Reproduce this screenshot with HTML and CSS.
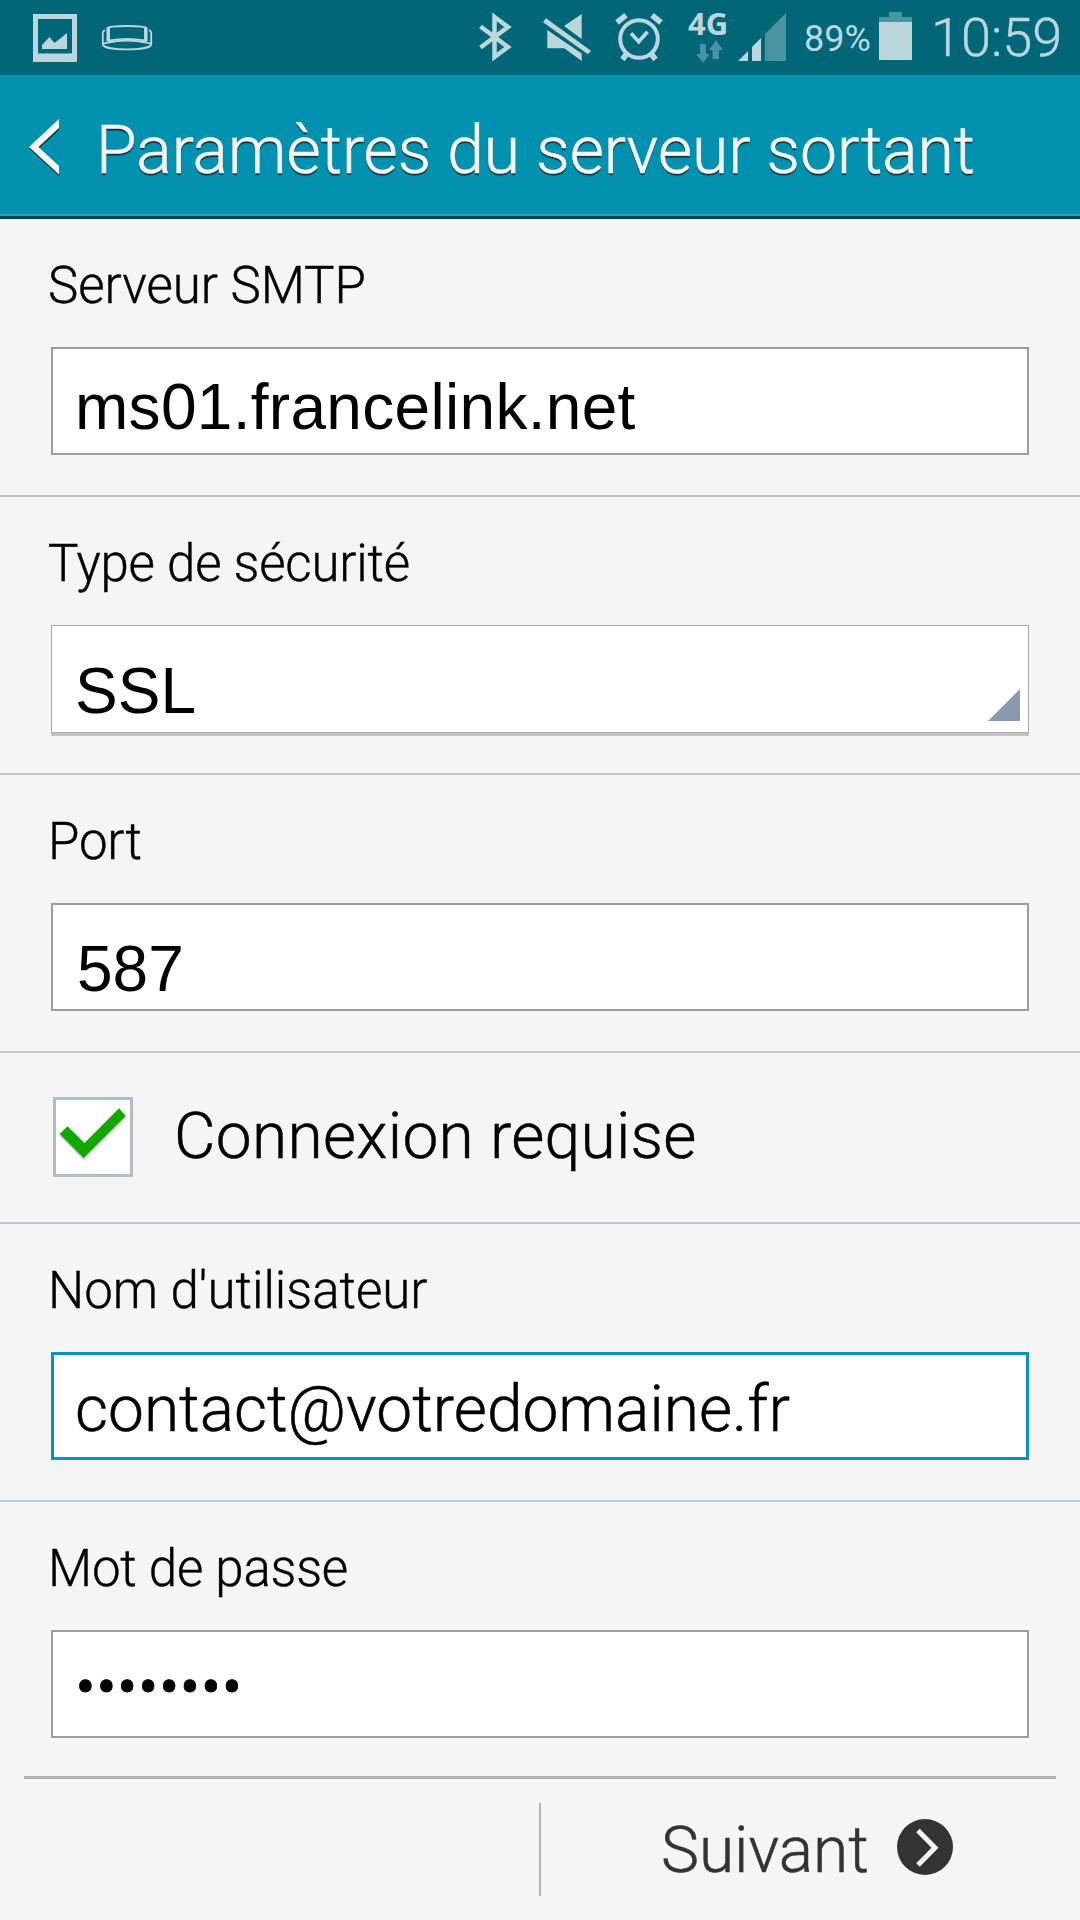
FILE: index.html
```html
<!DOCTYPE html>
<html lang="fr">
<head>
<meta charset="utf-8">
<title>Paramètres du serveur sortant</title>
<link rel="stylesheet" href="styles.css">
</head>
<body>
<div class="screen">
  <div class="status">
    <svg class="status-icons" width="1080" height="75" viewBox="0 0 1080 75">
      <path class="lit" fill-rule="evenodd" d="M33 14H77V62H33ZM38 19V53.500H72V19Z"/>
      <path class="lit" d="M42 45L49.500 37L54.500 43L67 33V49H42Z"/>
      <g class="line" stroke-width="1.800">
        <path d="M107 28.500Q109 26 127 26T147 28.500M109 40.500Q127 37.500 145 40.500"/>
        <path d="M105 30Q102.800 31 102.800 33V44.500C104 51 150 51 151.200 44.500V33Q151.200 31 149 30"/>
        <path d="M103 42.500Q104 44 108 42.500Q127 38.500 146 42.500Q150 44 151 42.500"/>
        <path stroke-width="3.500" d="M108.200 28V41.500M145.800 28V41.500"/>
      </g>
      <path class="line" stroke-width="4.500" d="M480.500 26.500L508 47L494.500 57V17L508 27L480.500 47.500"/>
      <path class="lit" d="M547.300 30L581.700 53.500V61L564.300 48.300H547.300ZM581.700 14V39L564 26ZM546 18.300L591 50.700L588 54.300L543 22.300Z"/>
      <g class="line" stroke-width="4">
        <circle cx="639" cy="39" r="18.800"/>
        <path stroke-width="3.700" d="M631 33.300L638.700 41.700L647.500 31.700"/>
        <path stroke-width="5.600" d="M617 22.500L626 15.200M652 15.200L661 22.500M626.500 54L622.500 59.500M651.500 54L655.500 59.500"/>
      </g>
      <path class="dim" d="M700 44H706V54H709.700L703 63L696.300 54H700ZM712.500 59V50H709L716 40.300L723 50H719V59ZM765 61V34L786 13V61ZM889 12H902V17H912V22H879V17H889Z"/>
      <path class="lit" d="M738 61L748 51V61ZM752 61V47L761 38V61ZM879 22H912V60H879Z"/>
    </svg>
    <span class="network">4G</span>
    <span class="percent">89%</span>
    <span class="clock">10:59</span>
  </div>
  <header class="header">
    <svg class="back" width="34" height="60" viewBox="0 0 34 60">
      <path fill="#05303a" d="M31 3V12L11 30.500L31 49.500V58L1 30.500Z"/>
      <path fill="#f5f5f5" d="M31 1V10L10.500 29L31 48V56.500L1 29Z"/>
    </svg>
    <h1 class="title">Paramètres du serveur sortant</h1>
  </header>
  <main class="form">
    <section class="row">
      <div class="label">Serveur SMTP</div>
      <div class="field arial host">ms01.francelink.net</div>
    </section>
    <section class="row">
      <div class="label tight">Type de sécurité</div>
      <div class="field arial select">SSL
        <svg class="corner" width="32" height="32" viewBox="0 0 32 32"><path fill="#8899ab" d="M32 0V32H0Z"/></svg>
      </div>
    </section>
    <section class="row">
      <div class="label tight">Port</div>
      <div class="field arial low">587</div>
    </section>
    <section class="row check-row">
      <div class="checkbox">
        <svg width="74" height="74" viewBox="0 0 74 74">
          <path fill="#d4d4d4" d="M3.700 36L11.500 28.500L28.500 45L63 10.300L69.800 18L27.600 60.500Z"/>
          <path fill="#12a800" d="M3.700 34L11.500 26.300L28.500 43L63 8.300L69.800 16L27.600 58Z"/>
        </svg>
      </div>
      <span class="check-label">Connexion requise</span>
    </section>
    <section class="row">
      <div class="label">Nom d'utilisateur</div>
      <div class="field focus">contact@votredomaine.fr</div>
    </section>
    <section class="row last">
      <div class="label tight">Mot de passe</div>
      <div class="field dots">••••••••</div>
    </section>
  </main>
  <footer class="footer">
    <div class="divider"></div>
    <div class="next">
      <span class="next-text">Suivant</span>
      <svg width="56" height="56" viewBox="0 0 56 56">
        <circle cx="28" cy="28" r="28" fill="#333"/>
        <path d="M21 11.500L38 28.700L21 46" fill="none" stroke="#f5f5f5" stroke-width="5"/>
      </svg>
    </div>
  </footer>
</div>
</body>
</html>
```
FILE: styles.css
```css
* { box-sizing: border-box; }
body { margin: 0; background: #f5f5f5; }
.screen {
  width: 1080px;
  height: 1920px;
  overflow: hidden;
  display: flex;
  flex-direction: column;
  font-family: Roboto, "Liberation Sans", sans-serif;
  font-weight: 300;
  color: #000;
  background: #f5f5f5;
  white-space: nowrap;
}
.status {
  position: relative;
  display: flex;
  height: 75px;
  background: #026679;
  color: #bcd7dc;
}
.status-icons { position: absolute; left: 0; top: 0; }
.lit { fill: #bcd7dc; }
.dim { fill: #4c93a1; }
.line { fill: none; stroke: #bcd7dc; }
.network {
  width: 116px;
  margin-left: 688px;
  font: 700 31px/40px "Open Sans", sans-serif;
  padding-top: 3px;
}
.percent { width: 127px; font-weight: 400; font-size: 36px; line-height: 78px; }
.clock { font-size: 54px; line-height: 75px; -webkit-text-stroke: 0.4px; }
.header {
  display: flex;
  height: 144px;
  padding: 43px 0 0 28px;
  background: #0291af;
  border-bottom: 3px solid #003f58;
  box-shadow: inset 0 -2px #27a2bb;
  color: #f5f5f5;
}
.title {
  margin: -7px 0 0 34px;
  font-size: 66px;
  line-height: 80px;
  font-weight: 300;
  text-shadow: 0 2px 1px #05303a;
  -webkit-text-stroke: 0.6px;
}
.row {
  height: 278px;
  padding: 37px 51px 40px;
  border-bottom: 2px solid #bfc9d1;
}
.label { height: 60px; margin: 0 0 31px -3px; font-size: 51px; line-height: 60px; -webkit-text-stroke: 0.4px; }
.tight { letter-spacing: -0.2px; }
.field {
  height: 108px;
  padding: 20px 0 0 22px;
  border: 2px solid #9d9d9d;
  background: #fff;
  font-size: 64px;
  line-height: 72px;
}
.arial { font-family: "Liberation Sans", Arial, sans-serif; font-weight: 400; padding-top: 22px; }
.host { letter-spacing: 0.3px; }
.low { padding: 28px 0 0 24px; }
.select {
  position: relative;
  border: 1px solid #a9a9a9;
  padding: 29px 0 0 23px;
  box-shadow: 0 3px 0 #c4c4c4;
}
.corner { position: absolute; right: 8px; bottom: 11px; }
.focus { border: 3px solid #0693c9; padding: 19px 0 0 21px; -webkit-text-stroke: 0.5px; }
.dots { letter-spacing: 0.2px; -webkit-text-stroke: 0.8px; }
.check-row { display: flex; align-items: flex-start; height: 171px; padding: 44px 0 0 53px; }
.checkbox { width: 80px; height: 80px; border: 3px solid #b0bec3; background: #fff; }
.checkbox svg { display: block; }
.check-label { margin: 1px 0 0 41px; font-size: 64px; line-height: 78px; letter-spacing: 0.28px; -webkit-text-stroke: 0.5px; }
.last { height: 274px; border: 0; }
.footer {
  display: grid;
  grid-template-columns: 515px 2px 1fr;
  height: 144px;
  margin: 0 24px;
  border-top: 3px solid #b0b0b0;
}
.divider { grid-column: 2; height: 93px; margin-top: 24px; background: #b5b5b5; }
.next { display: flex; padding: 40px 0 0 120px; color: #333; }
.next-text { width: 236px; margin-top: -7px; font-size: 64px; line-height: 78px; -webkit-text-stroke: 0.5px; }
```
